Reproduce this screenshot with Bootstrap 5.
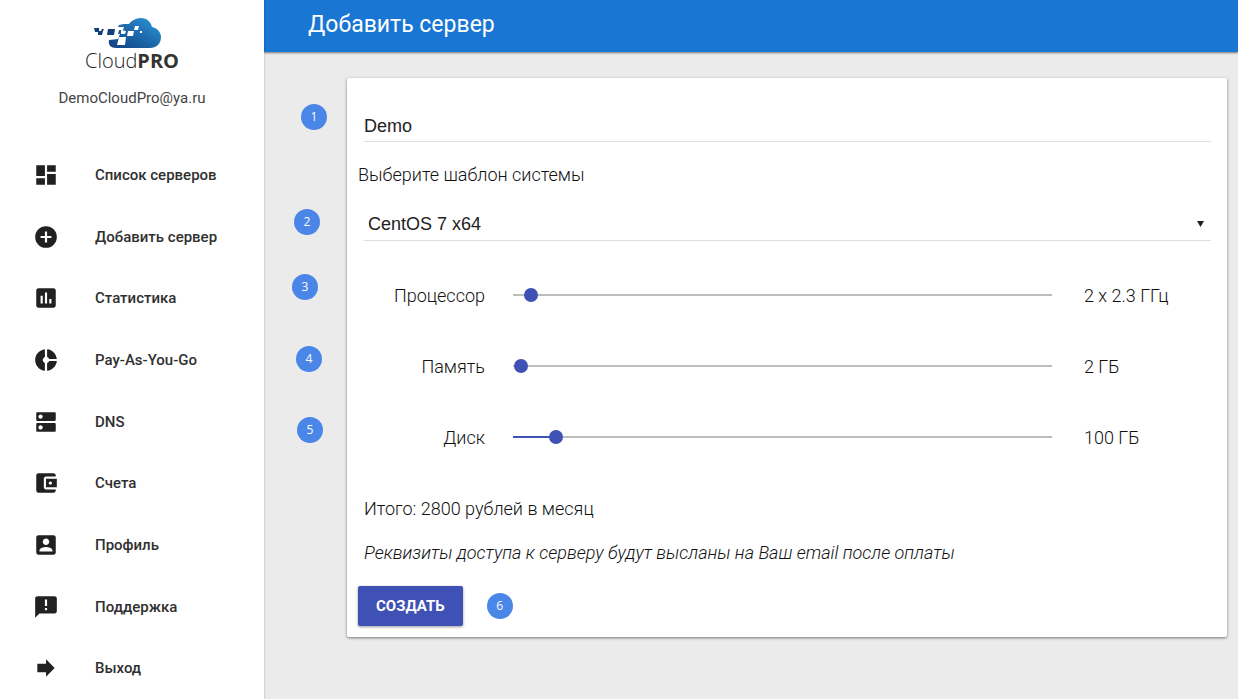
<!DOCTYPE html>
<html lang="ru">
<head>
<meta charset="utf-8">
<meta name="viewport" content="width=device-width, initial-scale=1">
<title>CloudPRO — Добавить сервер</title>
<link href="https://cdn.jsdelivr.net/npm/bootstrap@5.3.0/dist/css/bootstrap.min.css" rel="stylesheet">
<style>
  body { font-family: Roboto, "Open Sans", sans-serif; font-size: 18px; line-height: 26px; color: #212121; background: #ebebeb; }
  .sidebar { width: 264px; background: #fff; box-shadow: 0 0 2px rgba(0,0,0,.3); z-index: 2; }
  .brand-block { height: 144px; padding-top: 17px; }
  .wordmark { font: 300 20px/24px "Open Sans", "Noto Sans", sans-serif; color: #222; }
  .wordmark b { font-weight: 700; color: #333; }
  .account { font-size: 15px; line-height: 20px; color: #444; margin-top: 15px; }
  .side-link { gap: 36px; padding: 0 16px 0 33px; color: #303030; font-size: 15px; line-height: 20px; font-weight: 500; }
  .side-link:hover { background: #f3f3f3; color: #212121; }
  .side-link svg { width: 26px; height: 26px; fill: #212121; flex: none; }
  .topbar { height: 52px; padding: 0 44px 2px; background: #1976d2; color: #fff; box-shadow: 0 1px 2px rgba(0,0,0,.5); }
  .topbar h1 { font-size: 23px; line-height: 30px; font-weight: 400; }
  .content { padding: 26px 11px 26px 83px; }
  .panel { padding: 30px 11px 11px; border-radius: 2px; background: #fff; box-shadow: 0 1px 3px rgba(0,0,0,.5); font-weight: 300; color: #111; }
  .inset { padding: 0 5px 0 6px; }
  .line-field { height: 34px; padding: 4px 0 0; border: 0; border-bottom: 1px solid #dedede; border-radius: 0; background: transparent; color: #212121; font: 18px/26px "Liberation Sans", Arial, sans-serif; }
  .line-field:focus { outline: 0; border-color: #3f51b5; }
  .os-field { padding: 0 4px; appearance: none; }
  .caret { position: absolute; right: 12px; top: 14px; width: 7px; height: 6px; fill: #212121; pointer-events: none; }
  .field-label { margin: 20px 0 19px; }
  .sliders { margin: 18px 0 24px; }
  .slider-row { grid-template-columns: 127px 1fr 132px; height: 71px; }
  .slider-row label { text-align: right; }
  .slider-row label, .slider-row output { padding-top: 2px; }
  .track { appearance: none; display: block; height: 16px; margin: 0 32px 0 28px; background: linear-gradient(#3f51b5, #3f51b5) left center / var(--fill) 2px no-repeat, linear-gradient(#bdbdbd, #bdbdbd) center / 100% 2px no-repeat; }
  .track::-webkit-slider-thumb { appearance: none; width: 14px; height: 14px; border-radius: 50%; background: #3f51b5; }
  .track::-moz-range-thumb { width: 14px; height: 14px; border: 0; border-radius: 50%; background: #3f51b5; }
  .note { margin: 18px 0 20px; }
  .create { height: 40px; padding: 0 18px; border: 0; border-radius: 2px; background: #3f51b5; color: #fff; font-size: 15px; line-height: 24px; font-weight: 700; box-shadow: 0 1px 3px rgba(0,0,0,.4); }
  .create:hover { background: #35469f; color: #fff; }
  .step { width: 26px; height: 26px; border-radius: 50%; background: #4a86e8; color: #fff; font: 12px/26px "Open Sans", sans-serif; text-align: center; }
  /* Step markers hang in the gutter left of the panel */
  .step-out { position: absolute; left: var(--x); top: var(--y); }
</style>
</head>
<body>
<div class="d-flex min-vh-100">
  <aside class="sidebar d-flex flex-column flex-shrink-0 position-relative">
    <div class="brand-block text-center">
      <svg class="d-block mx-auto" width="76" height="32" viewBox="9 0 76 32" aria-hidden="true">
        <defs><linearGradient id="sky" x1="0" y1="1" x2="1" y2="0"><stop offset="0" stop-color="#10407f"/><stop offset=".5" stop-color="#1c69ab"/><stop offset="1" stop-color="#2e9bdc"/></linearGradient></defs>
        <path fill="url(#sky)" d="M24 23l9-1 2-5h-2l1-4h4l1-3h-6l1-2 5-1h5C46 4 51 1 56 1c6 0 10 4 11 9 5 1 9 5 9 10 0 7-5 11-11 11H31c-5 0-8-3-7-8z"/>
        <path fill="#fff" d="M34 20h7l-1 8h-8zM43 14h6l-1 5h-6zM50 9h4l-1 4h-4zM55 14h2v2h-2zM36 13l5 1-1 3h-4z"/>
        <path fill="#123f79" d="M23 12h7l-1 6h-7zM9 11h5v4h-4zM13 14h5l-1 4h-4zM17 12h2l-1 2h-2z"/>
      </svg>
      <div class="wordmark">Cloud<b>PRO</b></div>
      <div class="account">DemoCloudPro@ya.ru</div>
    </div>
    <nav class="d-flex flex-column flex-grow-1" aria-label="Главное меню">
      <a href="#" class="side-link d-flex align-items-center flex-fill text-decoration-none"><svg viewBox="0 0 24 24"><path d="M3 13h8V3H3v10zm0 8h8v-6H3v6zm10 0h8V11h-8v10zm0-18v6h8V3h-8z"/></svg>Список серверов</a>
      <a href="#" class="side-link d-flex align-items-center flex-fill text-decoration-none"><svg viewBox="0 0 24 24"><path d="M12 2a10 10 0 1 0 0 20 10 10 0 0 0 0-20zm5 11h-4v4h-2v-4H7v-2h4V7h2v4h4v2z"/></svg>Добавить сервер</a>
      <a href="#" class="side-link d-flex align-items-center flex-fill text-decoration-none"><svg viewBox="0 0 24 24"><path d="M19 3H5c-1.100 0-2 .9-2 2v14c0 1.100.9 2 2 2h14c1.100 0 2-.9 2-2V5c0-1.100-.9-2-2-2zM9 17H7v-7h2v7zm4 0h-2V7h2v10zm4 0h-2v-4h2v4z"/></svg>Статистика</a>
      <a href="#" class="side-link d-flex align-items-center flex-fill text-decoration-none"><svg viewBox="0 0 24 24"><path d="M11 9.160V2c-5 .5-9 4.790-9 10s4 9.500 9 10v-7.160c-1-.41-2-1.520-2-2.840s1-2.430 2-2.840zM14.860 11H22c-.48-4.750-4-8.530-9-9v7.160c1 .3 1.520.98 1.860 1.840zM13 14.840V22c5-.47 8.520-4.250 9-9h-7.140c-.34.86-.86 1.540-1.860 1.840z"/></svg>Pay-As-You-Go</a>
      <a href="#" class="side-link d-flex align-items-center flex-fill text-decoration-none"><svg viewBox="0 0 24 24"><path d="M20 13H4c-.55 0-1 .45-1 1v6c0 .55.45 1 1 1h16c.55 0 1-.45 1-1v-6c0-.55-.45-1-1-1zM7 19c-1.100 0-2-.9-2-2s.9-2 2-2 2 .9 2 2-.9 2-2 2zM20 3H4c-.55 0-1 .45-1 1v6c0 .55.45 1 1 1h16c.55 0 1-.45 1-1V4c0-.55-.45-1-1-1zM7 9c-1.100 0-2-.9-2-2s.9-2 2-2 2 .9 2 2-.9 2-2 2z"/></svg>DNS</a>
      <a href="#" class="side-link d-flex align-items-center flex-fill text-decoration-none"><svg viewBox="0 0 24 24"><path d="M21 18v1c0 1.100-.9 2-2 2H5c-1.110 0-2-.9-2-2V5c0-1.100.89-2 2-2h14c1.100 0 2 .9 2 2v1h-9c-1.110 0-2 .9-2 2v8c0 1.100.89 2 2 2h9zm-9-2h10V8H12v8zm4-2.500c-.83 0-1.500-.67-1.500-1.500s.67-1.500 1.500-1.500 1.500.67 1.500 1.500-.67 1.500-1.500 1.500z"/></svg>Счета</a>
      <a href="#" class="side-link d-flex align-items-center flex-fill text-decoration-none"><svg viewBox="0 0 24 24"><path d="M3 5v14c0 1.100.89 2 2 2h14c1.100 0 2-.9 2-2V5c0-1.100-.9-2-2-2H5c-1.110 0-2 .9-2 2zm12 4c0 1.660-1.340 3-3 3s-3-1.340-3-3 1.340-3 3-3 3 1.340 3 3zm-9 8c0-2 4-3.100 6-3.100s6 1.100 6 3.100v1H6v-1z"/></svg>Профиль</a>
      <a href="#" class="side-link d-flex align-items-center flex-fill text-decoration-none"><svg viewBox="0 0 24 24"><path d="M20 2H4c-1.100 0-2 .9-2 2v18l4-4h14c1.100 0 2-.9 2-2V4c0-1.100-.9-2-2-2zm-7 13h-2v-2h2v2zm0-4h-2V5h2v6z"/></svg>Поддержка</a>
      <a href="#" class="side-link d-flex align-items-center flex-fill text-decoration-none"><svg viewBox="0 0 24 24"><path d="M12 8V4l8 8-8 8v-4H4V8z"/></svg>Выход</a>
    </nav>
  </aside>

  <div class="flex-grow-1">
    <header class="topbar d-flex align-items-center"><h1 class="m-0">Добавить сервер</h1></header>
    <main class="content">
      <form class="panel">
        <div class="inset position-relative">
          <span class="step step-out" style="--x:-57px;--y:-4px">1</span>
          <input class="line-field w-100 d-block" type="text" value="Demo" aria-label="Имя сервера">
        </div>
        <label class="field-label d-block" for="os">Выберите шаблон системы</label>
        <div class="inset position-relative">
          <span class="step step-out" style="--x:-64px;--y:2px">2</span>
          <select id="os" class="line-field os-field w-100 d-block"><option>CentOS 7 x64</option></select>
          <svg class="caret" viewBox="0 0 7 6" aria-hidden="true"><path d="M0 0h7L3.500 6z"/></svg>
        </div>
        <div class="sliders">
          <div class="slider-row d-grid align-items-center position-relative">
            <span class="step step-out" style="--x:-66px;--y:15px">3</span>
            <label for="cpu">Процессор</label>
            <input id="cpu" class="track" type="range" min="1" max="50" value="2" style="--fill:0%">
            <output for="cpu">2 x 2.3 ГГц</output>
          </div>
          <div class="slider-row d-grid align-items-center position-relative">
            <span class="step step-out" style="--x:-62px;--y:16px">4</span>
            <label for="ram">Память</label>
            <input id="ram" class="track" type="range" min="1" max="512" value="2" style="--fill:0%">
            <output for="ram">2 ГБ</output>
          </div>
          <div class="slider-row d-grid align-items-center position-relative">
            <span class="step step-out" style="--x:-61px;--y:16px">5</span>
            <label for="disk">Диск</label>
            <input id="disk" class="track" type="range" min="30" max="1050" value="100" style="--fill:7%">
            <output for="disk">100 ГБ</output>
          </div>
        </div>
        <p class="inset m-0">Итого: 2800 рублей в месяц</p>
        <p class="note inset fst-italic">Реквизиты доступа к серверу будут высланы на Ваш email после оплаты</p>
        <div class="d-flex align-items-center">
          <button type="button" class="btn create">СОЗДАТЬ</button>
          <span class="step ms-4">6</span>
        </div>
      </form>
    </main>
  </div>
</div>
<script src="https://cdn.jsdelivr.net/npm/bootstrap@5.3.0/dist/js/bootstrap.bundle.min.js"></script>
</body>
</html>
